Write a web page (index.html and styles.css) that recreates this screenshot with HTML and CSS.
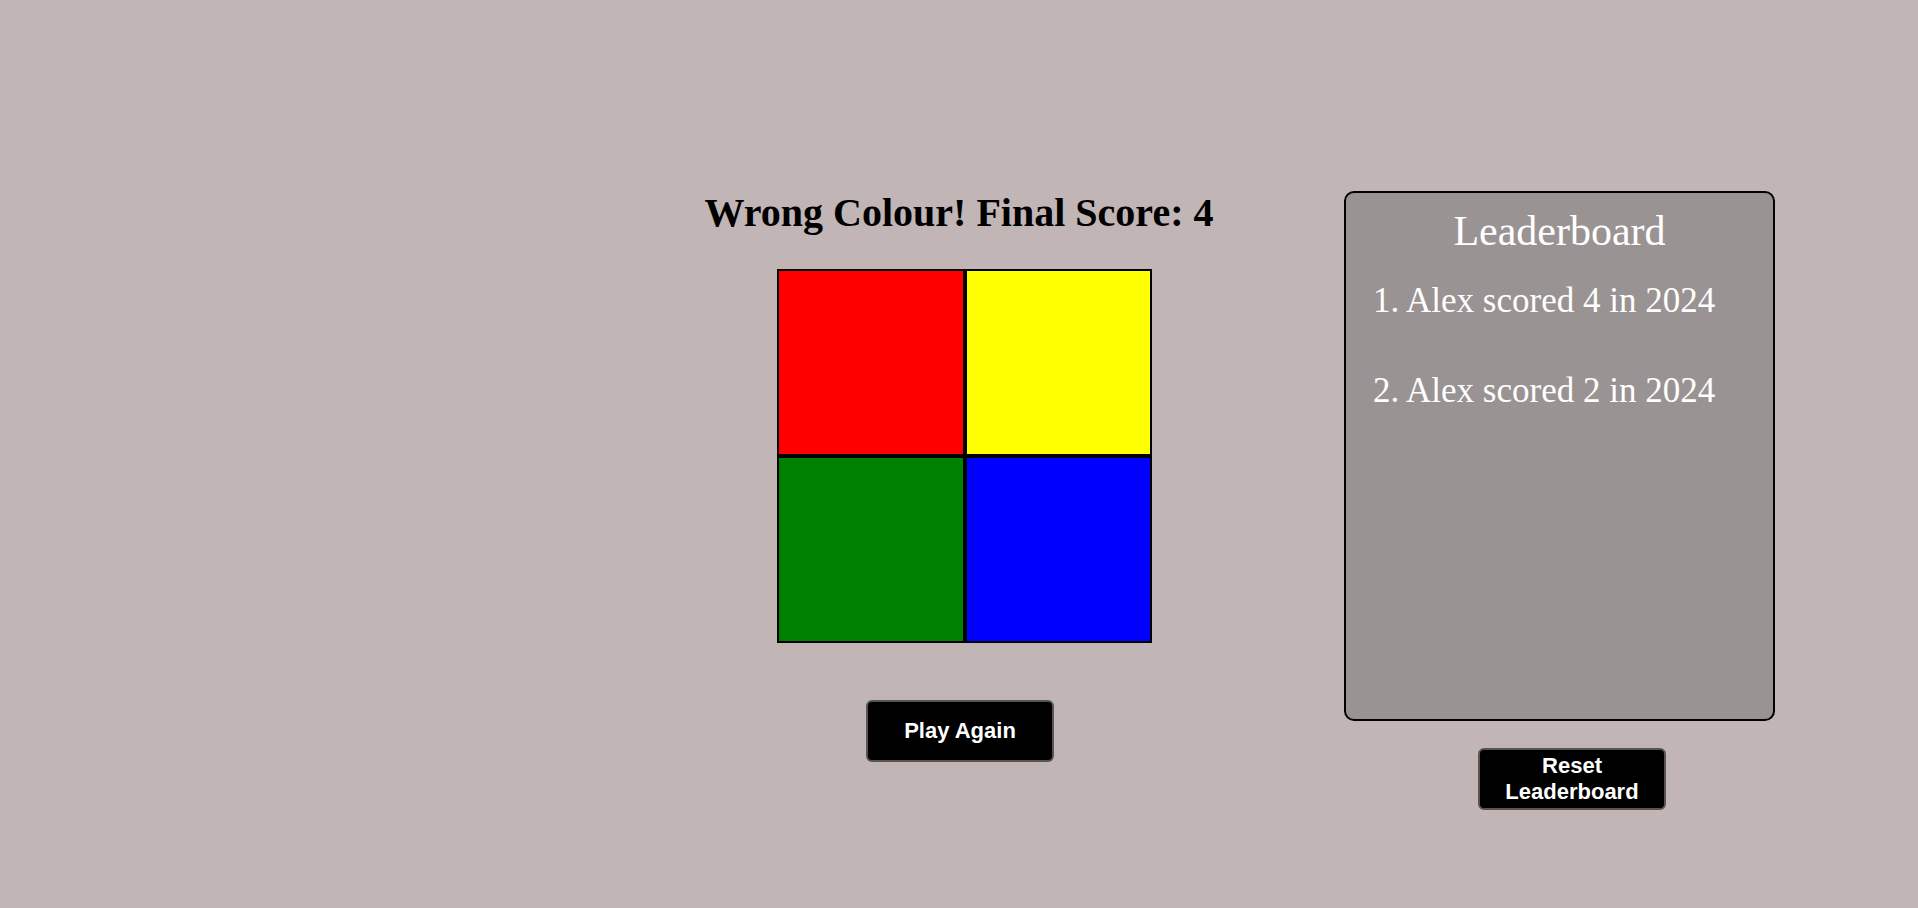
FILE: index.html
```html
<!DOCTYPE html>
<html>
<head>
<meta charset="utf-8">
<title>Colour Game</title>
<link rel="stylesheet" href="styles.css">
</head>
<body>
<div class="page">
  <div class="side"></div>
  <main class="game">
    <h1 class="status">Wrong Colour! Final Score: 4</h1>
    <div class="board">
      <div class="cell red"></div>
      <div class="cell yellow"></div>
      <div class="cell green"></div>
      <div class="cell blue"></div>
    </div>
    <button class="btn play">Play Again</button>
  </main>
  <aside class="side right">
    <section class="leaderboard">
      <h2 class="lb-title">Leaderboard</h2>
      <ol class="lb-list">
        <li>1. Alex scored 4 in 2024</li>
        <li>2. Alex scored 2 in 2024</li>
      </ol>
    </section>
    <button class="btn reset">Reset<br>Leaderboard</button>
  </aside>
</div>
</body>
</html>
```
FILE: styles.css
```css
html, body {
  margin: 0;
  padding: 0;
}
body {
  background: #c1b5b5;
  font-family: "Liberation Serif", "Times New Roman", serif;
  width: 1918px;
  height: 908px;
  overflow: hidden;
}
.page {
  display: grid;
  grid-template-columns: 1fr 400px 1fr;
  height: 908px;
}
.game {
  display: flex;
  flex-direction: column;
  align-items: center;
  padding-top: 190px;
}
.status {
  margin: 0;
  font-size: 40px;
  font-weight: bold;
  line-height: 45px;
  white-space: nowrap;
  color: #000;
}
.board {
  margin: 34px 0 0 11px;
  display: grid;
  grid-template-columns: 188px 187px;
  grid-template-rows: 187px 187px;
}
.cell {
  border: 2px solid #000;
  box-sizing: border-box;
}
.red { background: #ff0000; }
.yellow { background: #ffff00; }
.green { background: #008000; }
.blue { background: #0000ff; }
.btn {
  width: 188px;
  height: 62px;
  box-sizing: border-box;
  background: #000;
  color: #fff;
  border: 2px solid #555;
  border-radius: 6px;
  font-family: "Liberation Sans", Arial, sans-serif;
  font-weight: bold;
  font-size: 22px;
  line-height: 26px;
  padding: 0;
}
.play {
  margin: 57px 0 0 2px;
}
.right {
  display: flex;
  flex-direction: column;
  align-items: flex-start;
  padding: 191px 0 0 185px;
}
.leaderboard {
  width: 431px;
  height: 530px;
  box-sizing: border-box;
  background: #9a9393;
  border: 2px solid #000;
  border-radius: 10px;
  color: #fff;
}
.lb-title {
  margin: 15px 0 0;
  text-align: center;
  font-weight: normal;
  font-size: 42px;
  line-height: 47px;
}
.lb-list {
  list-style: none;
  margin: 26px 0 0;
  padding: 0 0 0 27px;
  font-size: 35px;
  line-height: 39px;
}
.lb-list li {
  margin-bottom: 51px;
}
.reset {
  margin: 27px 0 0 134px;
}
```
